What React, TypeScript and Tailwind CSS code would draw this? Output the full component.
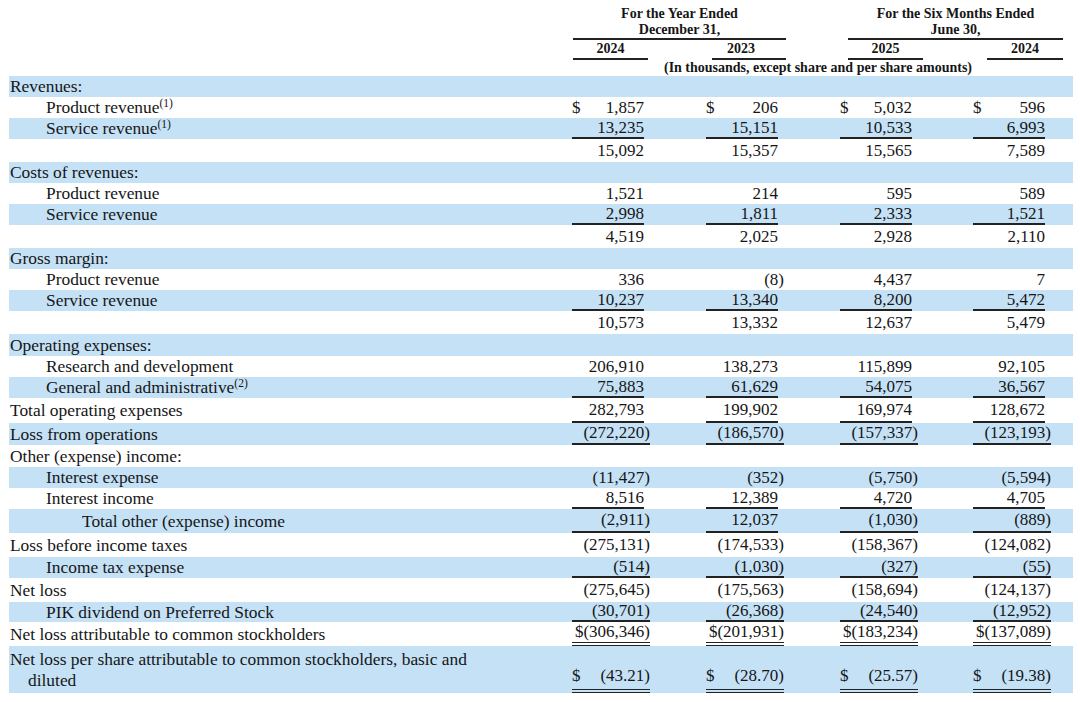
import React from "react";

type Row = {
  label: string;
  label2?: string;
  sup?: string;
  indent: 0 | 1 | 2;
  band: boolean;
  h: number;
  vals?: [string, string, string, string];
  dollar?: boolean;
  ul?: "single" | "double";
};

const rows: Row[] = [
  { label: "Revenues:", indent: 0, band: true, h: 21 },
  { label: "Product revenue", sup: "(1)", indent: 1, band: false, h: 21, vals: ["1,857", "206", "5,032", "596"], dollar: true },
  { label: "Service revenue", sup: "(1)", indent: 1, band: true, h: 21, vals: ["13,235", "15,151", "10,533", "6,993"], ul: "single" },
  { label: "", indent: 0, band: false, h: 23, vals: ["15,092", "15,357", "15,565", "7,589"] },
  { label: "Costs of revenues:", indent: 0, band: true, h: 21 },
  { label: "Product revenue", indent: 1, band: false, h: 21, vals: ["1,521", "214", "595", "589"] },
  { label: "Service revenue", indent: 1, band: true, h: 21, vals: ["2,998", "1,811", "2,333", "1,521"], ul: "single" },
  { label: "", indent: 0, band: false, h: 23, vals: ["4,519", "2,025", "2,928", "2,110"] },
  { label: "Gross margin:", indent: 0, band: true, h: 21 },
  { label: "Product revenue", indent: 1, band: false, h: 21, vals: ["336", "(8)", "4,437", "7"] },
  { label: "Service revenue", indent: 1, band: true, h: 21, vals: ["10,237", "13,340", "8,200", "5,472"], ul: "single" },
  { label: "", indent: 0, band: false, h: 23, vals: ["10,573", "13,332", "12,637", "5,479"] },
  { label: "Operating expenses:", indent: 0, band: true, h: 22 },
  { label: "Research and development", indent: 1, band: false, h: 21, vals: ["206,910", "138,273", "115,899", "92,105"] },
  { label: "General and administrative", sup: "(2)", indent: 1, band: true, h: 21, vals: ["75,883", "61,629", "54,075", "36,567"], ul: "single" },
  { label: "Total operating expenses", indent: 0, band: false, h: 25, vals: ["282,793", "199,902", "169,974", "128,672"], ul: "single" },
  { label: "Loss from operations", indent: 0, band: true, h: 22, vals: ["(272,220)", "(186,570)", "(157,337)", "(123,193)"], ul: "single" },
  { label: "Other (expense) income:", indent: 0, band: false, h: 22 },
  { label: "Interest expense", indent: 1, band: true, h: 21, vals: ["(11,427)", "(352)", "(5,750)", "(5,594)"] },
  { label: "Interest income", indent: 1, band: false, h: 21, vals: ["8,516", "12,389", "4,720", "4,705"], ul: "single" },
  { label: "Total other (expense) income", indent: 2, band: true, h: 24, vals: ["(2,911)", "12,037", "(1,030)", "(889)"], ul: "single" },
  { label: "Loss before income taxes", indent: 0, band: false, h: 24, vals: ["(275,131)", "(174,533)", "(158,367)", "(124,082)"] },
  { label: "Income tax expense", indent: 1, band: true, h: 21, vals: ["(514)", "(1,030)", "(327)", "(55)"], ul: "single" },
  { label: "Net loss", indent: 0, band: false, h: 24, vals: ["(275,645)", "(175,563)", "(158,694)", "(124,137)"] },
  { label: "PIK dividend on Preferred Stock", indent: 1, band: true, h: 20, vals: ["(30,701)", "(26,368)", "(24,540)", "(12,952)"], ul: "single" },
  { label: "Net loss attributable to common stockholders", indent: 0, band: false, h: 24, vals: ["$(306,346)", "$(201,931)", "$(183,234)", "$(137,089)"], ul: "double" },
  {
    label: "Net loss per share attributable to common stockholders, basic and",
    label2: "diluted",
    indent: 0,
    band: true,
    h: 47,
    vals: ["(43.21)", "(28.70)", "(25.57)", "(19.38)"],
    dollar: true,
    ul: "double",
  },
];

const colGaps = ["ml-0", "ml-[56px]", "ml-[56px]", "ml-[55px]"];

function Cell({ v, dollar, ul, tall, gap }: { v?: string; dollar?: boolean; ul?: "single" | "double"; tall: boolean; gap: string }) {
  const paren = !!v && v.endsWith(")");
  const width = paren ? "w-[78px]" : "w-[72px]";
  const border =
    ul === "double"
      ? "border-b-[4px] border-double border-[#222]"
      : ul === "single"
      ? "border-b-2 border-[#222]"
      : "";
  return (
    <div className={`${gap} w-[78px] h-full flex`}>
      {v !== undefined && (
        <div className={`${width} h-full flex justify-between ${tall ? "items-end pb-[1px]" : "items-center"} ${border}`}>
          <span>{dollar ? "$" : ""}</span>
          <span>{v}</span>
        </div>
      )}
    </div>
  );
}

export default function App() {
  return (
    <div className="w-[1080px] h-[702px] bg-white text-[#161616] font-['Liberation_Serif','Times_New_Roman',serif] overflow-hidden">
      {/* Header */}
      <div className="pt-[6px] text-[14px] font-bold leading-[16px]">
        <div className="flex pl-[573px]">
          <div className="w-[213px]">
            <div className="border-b-2 border-[#222] text-center">
              <div className="h-[16px]">For the Year Ended</div>
              <div className="h-[16px]">December 31,</div>
            </div>
            <div className="flex justify-between">
              <div className="w-[75px] h-[20px] leading-[18px] border-b-2 border-[#222] text-center">2024</div>
              <div className="w-[74px] h-[20px] leading-[18px] border-b-2 border-[#222] text-center pr-[16px]">2023</div>
            </div>
          </div>
          <div className="w-[215px] ml-[62px]">
            <div className="border-b-2 border-[#222] text-center">
              <div className="h-[16px]">For the Six Months Ended</div>
              <div className="h-[16px]">June 30,</div>
            </div>
            <div className="flex justify-between">
              <div className="w-[75px] h-[20px] leading-[18px] border-b-2 border-[#222] text-center">2025</div>
              <div className="w-[76px] h-[20px] leading-[18px] border-b-2 border-[#222] text-center">2024</div>
            </div>
          </div>
        </div>
        <div className="ml-[573px] w-[490px] h-[16px] text-center">(In thousands, except share and per share amounts)</div>
      </div>

      {/* Table */}
      <div className="ml-[9px] w-[1064px] text-[17px]">
        {rows.map((r, i) => {
          const tall = r.h > 30;
          const indent = r.indent === 0 ? "pl-px" : r.indent === 1 ? "pl-[37px]" : "pl-[73px]";
          return (
            <div
              key={i}
              className={`flex ${r.band ? "bg-[#c4e1f6]" : ""}`}
              style={{ height: r.h }}
            >
              <div className={`w-[563px] h-full flex ${tall ? "flex-col justify-center" : "items-center"} ${indent} leading-[21px] text-[17.4px]`}>
                <div className="whitespace-nowrap">
                  {r.label}
                  {r.sup && <sup className="text-[11.5px] top-[-6px] relative align-baseline">{r.sup}</sup>}
                </div>
                {r.label2 && <div className="pl-[18px]">{r.label2}</div>}
              </div>
              {[0, 1, 2, 3].map((c) => (
                <Cell
                  key={c}
                  v={r.vals ? r.vals[c] : undefined}
                  dollar={r.dollar}
                  ul={r.ul}
                  tall={tall}
                  gap={colGaps[c]}
                />
              ))}
            </div>
          );
        })}
      </div>
    </div>
  );
}
